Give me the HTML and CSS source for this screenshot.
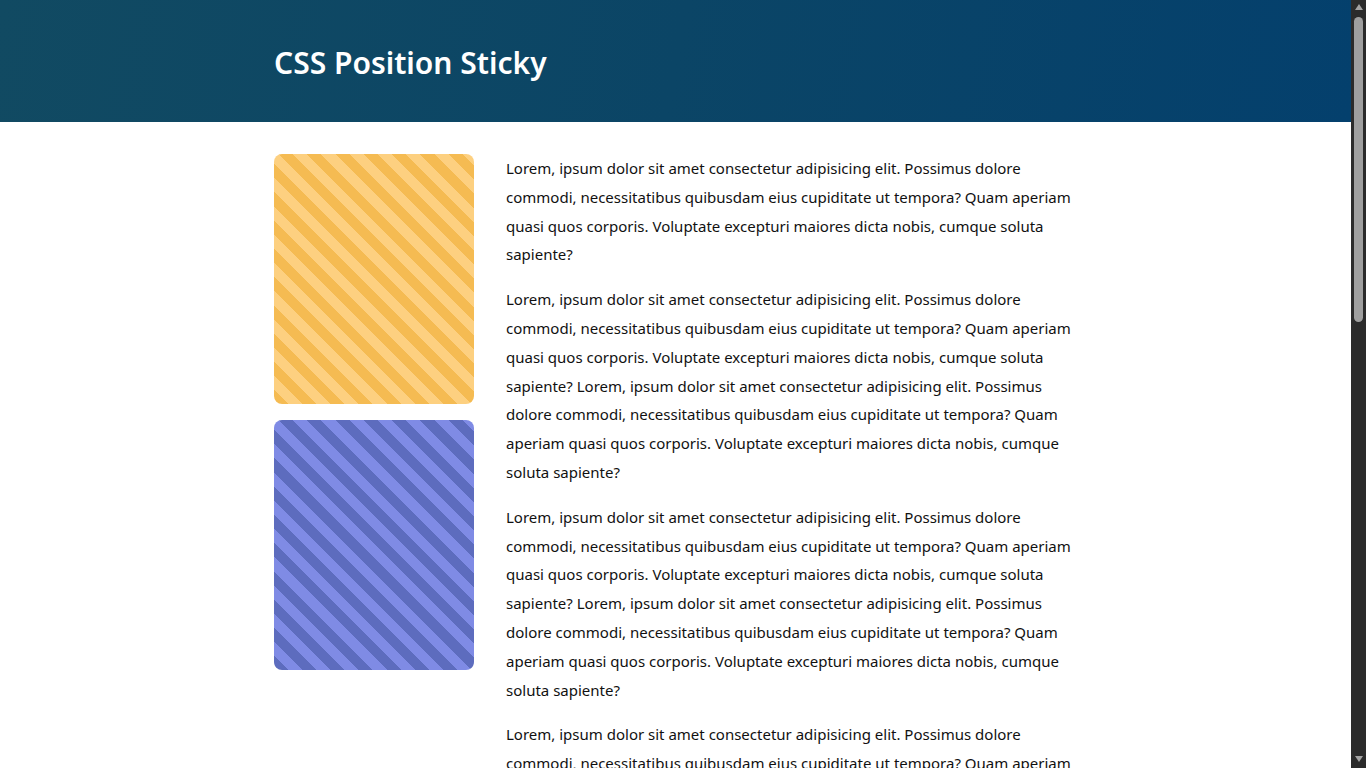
FILE: index.html
```html
<!DOCTYPE html>
<html lang="en">
<head>
<meta charset="utf-8">
<title>CSS Position Sticky</title>
<link rel="stylesheet" href="styles.css">
</head>
<body>
<div class="page">
<header class="site-header">
  <div class="container">
    <h1 class="title">CSS Position Sticky</h1>
  </div>
</header>
<main class="container layout">
  <aside class="sidebar">
    <div class="box box-yellow"></div>
    <div class="box box-blue"></div>
  </aside>
  <article class="content">
    <p>Lorem, ipsum dolor sit amet consectetur adipisicing elit. Possimus dolore commodi, necessitatibus quibusdam eius cupiditate ut tempora? Quam aperiam quasi quos corporis. Voluptate excepturi maiores dicta nobis, cumque soluta sapiente?</p>
    <p>Lorem, ipsum dolor sit amet consectetur adipisicing elit. Possimus dolore commodi, necessitatibus quibusdam eius cupiditate ut tempora? Quam aperiam quasi quos corporis. Voluptate excepturi maiores dicta nobis, cumque soluta sapiente? Lorem, ipsum dolor sit amet consectetur adipisicing elit. Possimus dolore commodi, necessitatibus quibusdam eius cupiditate ut tempora? Quam aperiam quasi quos corporis. Voluptate excepturi maiores dicta nobis, cumque soluta sapiente?</p>
    <p>Lorem, ipsum dolor sit amet consectetur adipisicing elit. Possimus dolore commodi, necessitatibus quibusdam eius cupiditate ut tempora? Quam aperiam quasi quos corporis. Voluptate excepturi maiores dicta nobis, cumque soluta sapiente? Lorem, ipsum dolor sit amet consectetur adipisicing elit. Possimus dolore commodi, necessitatibus quibusdam eius cupiditate ut tempora? Quam aperiam quasi quos corporis. Voluptate excepturi maiores dicta nobis, cumque soluta sapiente?</p>
    <p>Lorem, ipsum dolor sit amet consectetur adipisicing elit. Possimus dolore commodi, necessitatibus quibusdam eius cupiditate ut tempora? Quam aperiam quasi quos corporis. Voluptate excepturi maiores dicta nobis, cumque soluta sapiente? Lorem, ipsum dolor sit amet consectetur adipisicing elit. Possimus dolore commodi, necessitatibus quibusdam eius cupiditate ut tempora? Quam aperiam quasi quos corporis. Voluptate excepturi maiores dicta nobis, cumque soluta sapiente?</p>
    <p>Lorem, ipsum dolor sit amet consectetur adipisicing elit. Possimus dolore commodi, necessitatibus quibusdam eius cupiditate ut tempora? Quam aperiam quasi quos corporis. Voluptate excepturi maiores dicta nobis, cumque soluta sapiente? Lorem, ipsum dolor sit amet consectetur adipisicing elit. Possimus dolore commodi, necessitatibus quibusdam eius cupiditate ut tempora? Quam aperiam quasi quos corporis. Voluptate excepturi maiores dicta nobis, cumque soluta sapiente?</p>
    <p>Lorem, ipsum dolor sit amet consectetur adipisicing elit. Possimus dolore commodi, necessitatibus quibusdam eius cupiditate ut tempora? Quam aperiam quasi quos corporis. Voluptate excepturi maiores dicta nobis, cumque soluta sapiente? Lorem, ipsum dolor sit amet consectetur adipisicing elit. Possimus dolore commodi, necessitatibus quibusdam eius cupiditate ut tempora? Quam aperiam quasi quos corporis. Voluptate excepturi maiores dicta nobis, cumque soluta sapiente?</p>
    <p>Lorem, ipsum dolor sit amet consectetur adipisicing elit. Possimus dolore commodi, necessitatibus quibusdam eius cupiditate ut tempora? Quam aperiam quasi quos corporis. Voluptate excepturi maiores dicta nobis, cumque soluta sapiente? Lorem, ipsum dolor sit amet consectetur adipisicing elit. Possimus dolore commodi, necessitatibus quibusdam eius cupiditate ut tempora? Quam aperiam quasi quos corporis. Voluptate excepturi maiores dicta nobis, cumque soluta sapiente?</p>
    <p>Lorem, ipsum dolor sit amet consectetur adipisicing elit. Possimus dolore commodi, necessitatibus quibusdam eius cupiditate ut tempora? Quam aperiam quasi quos corporis. Voluptate excepturi maiores dicta nobis, cumque soluta sapiente?</p>
  </article>
</main>
</div>
<div class="scrollbar" aria-hidden="true">
  <span class="sb-arrow sb-up"></span>
  <span class="sb-thumb"></span>
  <span class="sb-spacer"></span>
  <span class="sb-arrow sb-down"></span>
</div>
</body>
</html>
```
FILE: styles.css
```css
* {
  box-sizing: border-box;
}
html, body {
  margin: 0;
  height: 100%;
  overflow: hidden;
}
body {
  display: flex;
  font-family: "Noto Sans", "Open Sans", sans-serif;
  font-size: 15px;
  color: #111;
  background: #fff;
}
.page {
  flex: 1;
  min-width: 0;
  height: 100vh;
  overflow-y: auto;
  scrollbar-width: none;
}
.page::-webkit-scrollbar {
  display: none;
}
.scrollbar {
  flex: 0 0 15px;
  height: 100vh;
  background: #2b2b2b;
  display: flex;
  flex-direction: column;
  align-items: center;
  padding: 4px 0 6px;
}
.sb-arrow {
  width: 0;
  height: 0;
  border-left: 4px solid transparent;
  border-right: 4px solid transparent;
}
.sb-up {
  border-bottom: 6px solid #a3a3a3;
}
.sb-down {
  border-top: 6px solid #a3a3a3;
}
.sb-thumb {
  margin-top: 7px;
  width: 9px;
  height: 305px;
  border-radius: 5px;
  background: #9f9f9f;
}
.sb-spacer {
  flex: 1;
}
.container {
  width: 803px;
  margin: 0 auto;
}
.site-header {
  background: linear-gradient(100deg, #114a62 0%, #0b4566 50%, #04406d 100%);
  height: 122px;
  display: flex;
  align-items: center;
}
.title {
  margin: 0;
  padding-top: 3px;
  color: #fff;
  font-size: 30px;
  font-weight: 600;
  line-height: 1.2;
}
.layout {
  display: flex;
  gap: 32px;
  padding: 32px 0;
}
.sidebar {
  flex: 0 0 200px;
  display: flex;
  flex-direction: column;
  gap: 16px;
  align-self: flex-start;
  position: sticky;
  top: 16px;
}
.box {
  width: 200px;
  height: 250px;
  border-radius: 8px;
}
.box-yellow {
  background: repeating-linear-gradient(45deg, #f5bb52 0 10px, #fdd080 10px 20px);
}
.box-blue {
  background: repeating-linear-gradient(45deg, #5d6cbe 0 10px, #7f8be5 10px 20px);
}
.content {
  flex: 1;
  min-width: 0;
}
.content p {
  margin: 0 0 16px;
  line-height: 28.8px;
}
```
